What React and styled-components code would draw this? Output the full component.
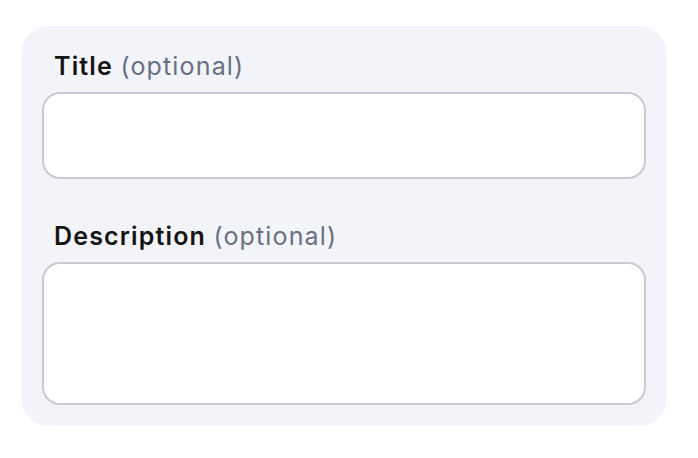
import React from "react";
import styled, { createGlobalStyle } from "styled-components";

const Global = createGlobalStyle`
  html, body { margin: 0; padding: 0; background: #ffffff; }
  body { font-family: Inter, "Noto Sans", sans-serif; }
  * { box-sizing: border-box; }
`;

const Page = styled.div`
  padding: 26px 0 0 22px;
`;

const Panel = styled.form`
  width: 644px;
  background: #f3f4f9;
  border-radius: 26px;
  padding: 22px 20px 21px;
  display: flex;
  flex-direction: column;
  gap: 39px;
`;

const Field = styled.div`
  display: flex;
  flex-direction: column;
  gap: 8px;
`;

const Label = styled.label`
  font-size: 25px;
  line-height: 36px;
  font-weight: 600;
  letter-spacing: 1.15px;
  color: #141414;
  padding-left: 12px;
`;

const Optional = styled.span`
  font-weight: 400;
  color: #667085;
`;

const boxStyles = `
  width: 100%;
  background: #ffffff;
  border: 2px solid #c9cad2;
  border-radius: 18px;
  font-family: Inter, "Noto Sans", sans-serif;
  font-size: 20px;
  padding: 12px 16px;
  outline: none;
  display: block;
`;

const TextInput = styled.input`
  ${boxStyles}
  height: ${(p) => p.$h}px;
`;

const TextArea = styled.textarea`
  ${boxStyles}
  height: ${(p) => p.$h}px;
  resize: none;
`;

export default function App() {
  return (
    <>
      <Global />
      <Page>
        <Panel onSubmit={(e) => e.preventDefault()}>
          <Field>
            <Label htmlFor="title">
              Title <Optional>(optional)</Optional>
            </Label>
            <TextInput id="title" $h={87} />
          </Field>
          <Field>
            <Label htmlFor="desc">
              Description <Optional>(optional)</Optional>
            </Label>
            <TextArea id="desc" $h={143} />
          </Field>
        </Panel>
      </Page>
    </>
  );
}
